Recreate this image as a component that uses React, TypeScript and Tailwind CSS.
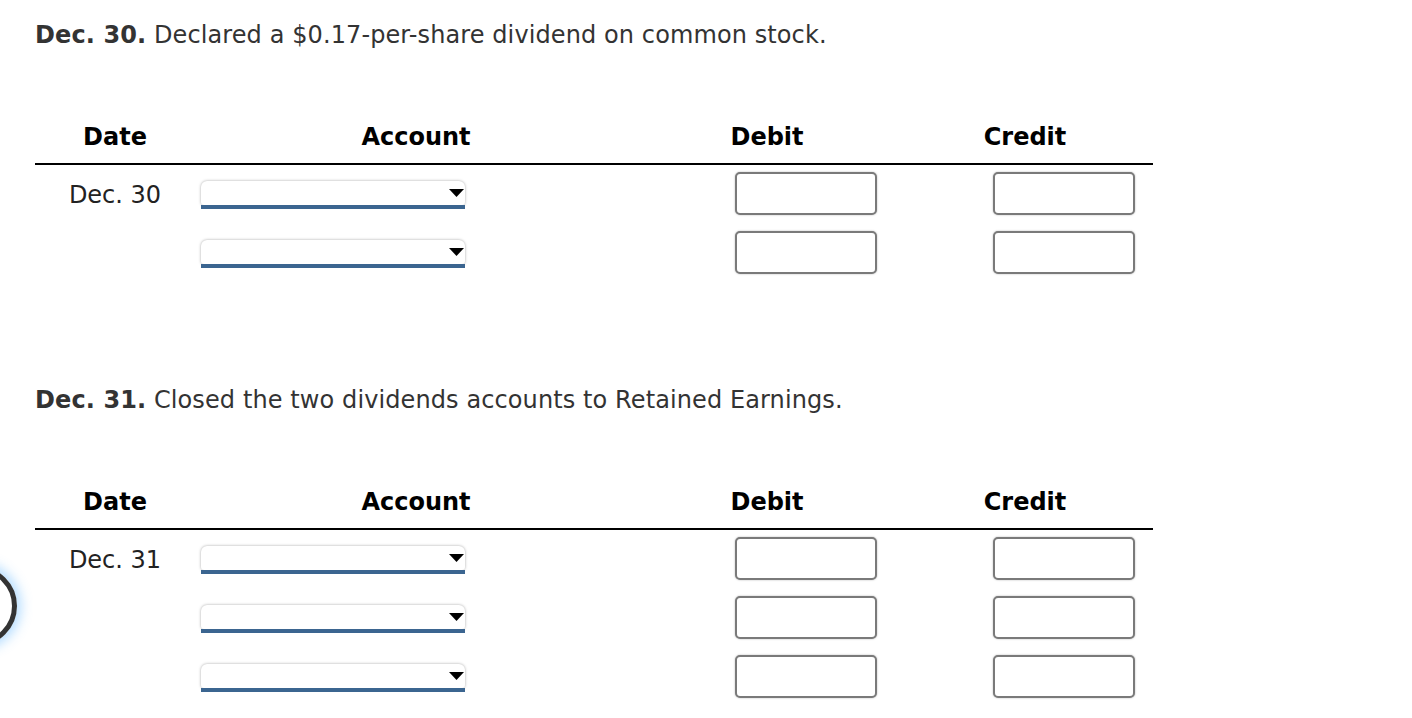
import React from "react";

type Entry = {
  date: string;
  title: string;
  text: string;
  rows: number;
};

const entries: Entry[] = [
  { date: "Dec. 30", title: "Dec. 30.", text: "Declared a $0.17-per-share dividend on common stock.", rows: 2 },
  { date: "Dec. 31", title: "Dec. 31.", text: "Closed the two dividends accounts to Retained Earnings.", rows: 3 },
];

const cols = "grid w-[1118px] grid-cols-[160px_442px_260px_256px]";

function AccountSelect() {
  return (
    <div className="ml-[6px] flex w-[264px] flex-col">
      <div className="flex h-[24px] items-center justify-end rounded-t-[6px] rounded-b-[3px] bg-white pr-[1px] shadow-[0_0_3px_rgba(0,0,0,0.35)]">
        <svg width="15" height="8" viewBox="0 0 15 8">
          <path d="M0 0 L15 0 L7.5 8 Z" fill="#000" />
        </svg>
      </div>
      <div className="h-[4px] bg-[#3b6590]" />
    </div>
  );
}

function AmountInput({ pr }: { pr: string }) {
  return (
    <div className={`flex justify-end ${pr}`}>
      <input
        type="text"
        className="mb-[2px] h-[43px] w-[142px] rounded-[5px] border-2 border-[#7a7a7a] bg-white shadow-[0_0_2px_rgba(0,0,0,0.3)] outline-none"
      />
    </div>
  );
}

function Journal({ entry, first }: { entry: Entry; first: boolean }) {
  return (
    <section className={first ? "pt-[21px]" : "pt-[103px]"}>
      <p className="text-[24px] leading-[28px] tracking-[0.1px] text-[#333]">
        <span className="font-bold">{entry.title}</span> {entry.text}
      </p>
      <div className={`${cols} mt-[74px] border-b-2 border-black pb-[12px] text-[24px] font-bold leading-[28px] text-black`}>
        <div className="text-center">Date</div>
        <div className="text-center">Account</div>
        <div className="text-center">Debit</div>
        <div className="text-center">Credit</div>
      </div>
      {Array.from({ length: entry.rows }).map((_, i) => (
        <div key={i} className={`${cols} h-[59px] items-center`}>
          <div className="text-center text-[24px] leading-[28px] text-[#222]">{i === 0 ? entry.date : ""}</div>
          <AccountSelect />
          <AmountInput pr="pr-[20px]" />
          <AmountInput pr="pr-[18px]" />
        </div>
      ))}
    </section>
  );
}

export default function App(): React.ReactElement {
  return (
    <div className="relative h-[718px] w-[1412px] overflow-hidden bg-white pl-[35px] font-['DejaVu_Sans',Verdana,sans-serif]">
      {entries.map((e, i) => (
        <Journal key={e.date} entry={e} first={i === 0} />
      ))}
      {/* partial focus ring at the left edge */}
      <div className="absolute left-[-63px] top-[566px] h-[80px] w-[80px] rounded-full border-[5px] border-[#333] shadow-[0_0_12px_4px_rgba(90,180,255,0.45)]" />
    </div>
  );
}
